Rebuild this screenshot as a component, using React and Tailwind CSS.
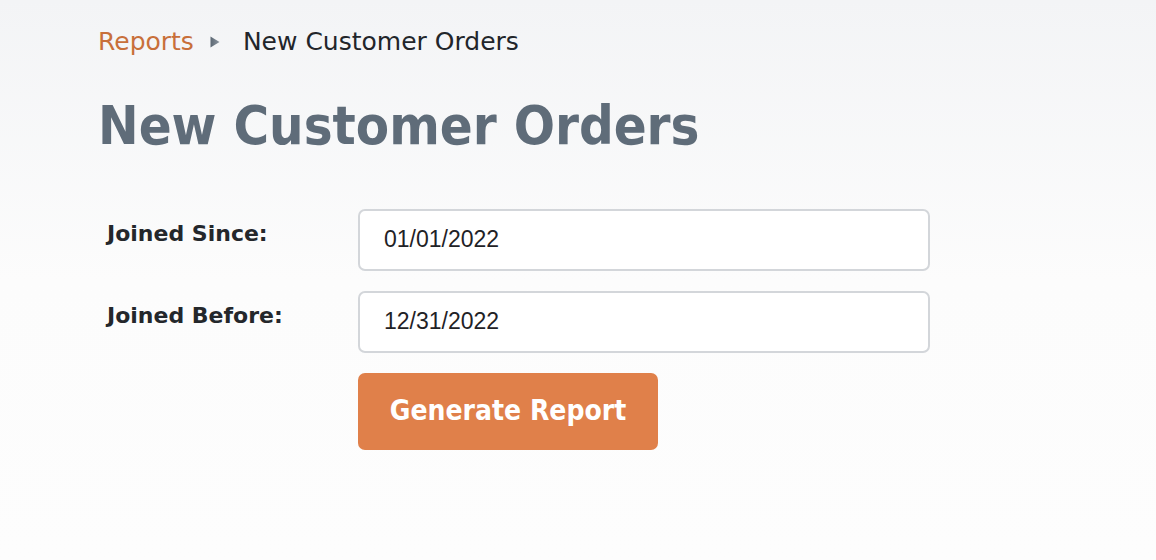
import { useState } from "react";

const tahoma = { fontFamily: '"DejaVu Sans", Verdana, sans-serif' };
const tahomaNarrow = { fontFamily: '"DejaVu Sans Condensed", "DejaVu Sans", sans-serif' };

function Field({ label, value, onChange }) {
  return (
    <div className="flex items-start">
      <label className="w-[251px] pt-[8px] text-[22px] font-bold text-[#24272b]" style={tahoma}>
        {label}
      </label>
      <input
        type="text"
        value={value}
        onChange={(e) => onChange(e.target.value)}
        className="h-[62px] w-[572px] rounded-[7px] border-2 border-[#d3d6da] bg-white px-[24px] text-[23px] text-[#1f2226] outline-none font-['Liberation_Sans',Arial,sans-serif]"
      />
    </div>
  );
}

export default function App() {
  const [since, setSince] = useState("01/01/2022");
  const [before, setBefore] = useState("12/31/2022");

  return (
    <div className="min-h-[560px] w-full bg-gradient-to-b from-[#f3f4f6] via-[#fcfcfc] to-[#fdfdfd]">
      <div className="px-[98px] pt-[23px]">
        {/* breadcrumb */}
        <nav className="flex items-center text-[25px]" style={tahoma}>
          <a href="#" className="text-[#c86f3a]">Reports</a>
          <svg viewBox="0 0 12 14" className="ml-[15px] mt-[1px] h-[14px] w-[12px]">
            <defs>
              <linearGradient id="crumb" x1="0" x2="1" y1="0" y2="0">
                <stop offset="0" stopColor="#5c6874" />
                <stop offset="1" stopColor="#8a949e" />
              </linearGradient>
            </defs>
            <path d="M1.5 1.5 L10.5 7 L1.5 12.5 Z" fill="url(#crumb)" />
          </svg>
          <span className="ml-[22px] text-[#22252a]">New Customer Orders</span>
        </nav>

        <h1 className="mt-[38px] text-[54px] leading-none font-bold text-[#5f6c79]" style={tahomaNarrow}>
          New Customer Orders
        </h1>

        <form className="mt-[56px] flex flex-col gap-[20px] pl-[9px]" onSubmit={(e) => e.preventDefault()}>
          <Field label="Joined Since:" value={since} onChange={setSince} />
          <Field label="Joined Before:" value={before} onChange={setBefore} />
          <div className="ml-[251px]">
            <button
              type="submit"
              className="h-[77px] w-[300px] rounded-[7px] bg-[#e0804a] text-[28px] font-bold text-white"
              style={tahomaNarrow}
            >
              Generate Report
            </button>
          </div>
        </form>
      </div>
    </div>
  );
}
